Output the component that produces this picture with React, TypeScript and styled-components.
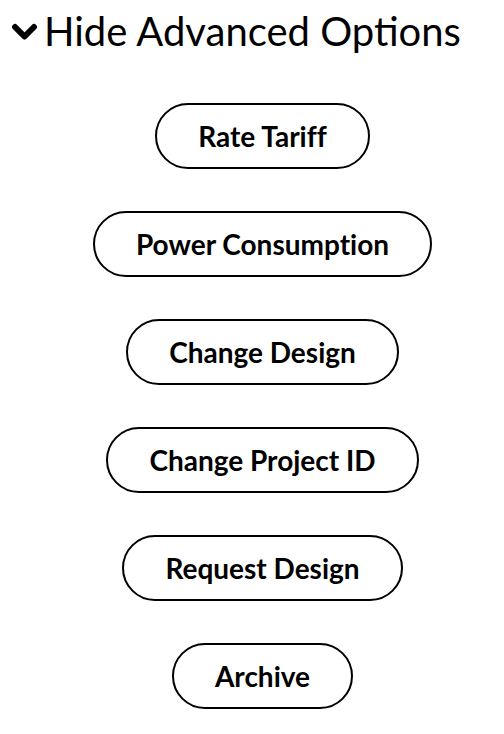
import styled, {createGlobalStyle} from "styled-components";

const GlobalStyle = createGlobalStyle`
  body {
    margin: 0;
    background: #fff;
    color: #000;
    font-family: Lato, "Noto Sans", sans-serif;
  }
`

const Page = styled.div`
  display: flex;
  flex-direction: column;
  padding: 7px 0 0;
`

const Toggle = styled.button`
  display: flex;
  align-items: center;
  gap: 6px;
  height: 48px;
  padding: 0 0 0 11px;
  border: none;
  background: none;
  color: #000;
  font-family: Lato, sans-serif;
  font-size: 40px;
  font-weight: 400;
  line-height: 48px;
  cursor: pointer;
  align-self: flex-start;
`

const Chevron = styled.svg`
  width: 27px;
  height: 19px;
  margin-top: 3px;
`

const ButtonList = styled.div`
  display: flex;
  flex-direction: column;
  align-items: center;
  gap: 42px;
  padding: 48px 0 0 21px;
`

const OptionButton = styled.button`
  box-sizing: border-box;
  height: 66px;
  padding: 0 41px;
  border: 2px solid #000;
  border-radius: 33px;
  background: #fff;
  color: #000;
  font-family: Lato, sans-serif;
  font-size: 28px;
  font-weight: 700;
  font-variant-ligatures: none;
  cursor: pointer;
`

const options = [
  'Rate Tariff',
  'Power Consumption',
  'Change Design',
  'Change Project ID',
  'Request Design',
  'Archive',
]

const App = () => {
  return (
    <Page>
      <GlobalStyle/>
      <Toggle>
        <Chevron viewBox="0 0 27 19">
          <polyline points="4,4 13.5,13.5 23,4" fill="none" stroke="#000" strokeWidth="6"
                    strokeLinecap="round" strokeLinejoin="round"/>
        </Chevron>
        Hide Advanced Options
      </Toggle>
      <ButtonList>
        {options.map(el => <OptionButton key={el}>{el}</OptionButton>)}
      </ButtonList>
    </Page>
  )
}

export default App
